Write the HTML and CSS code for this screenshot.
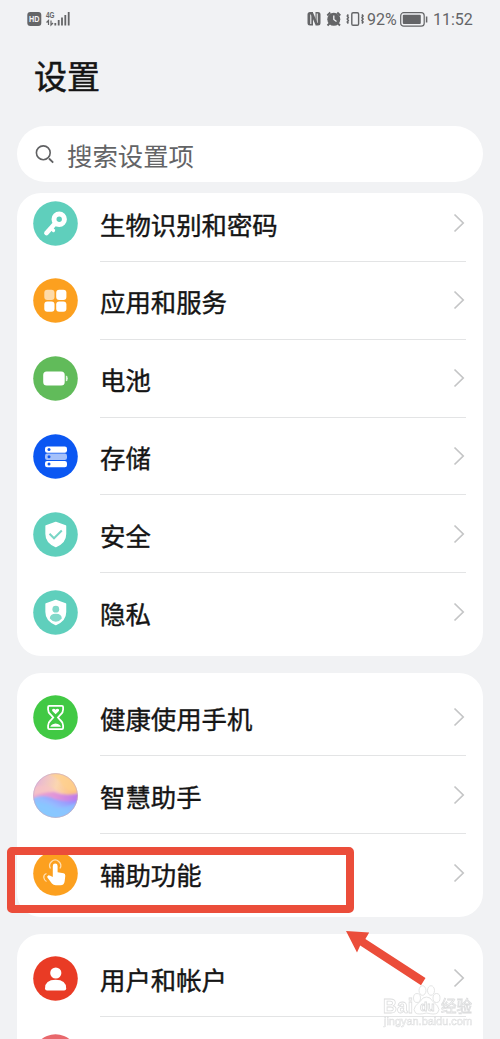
FILE: index.html
```html
<!DOCTYPE html>
<html lang="zh-CN">
<head>
<meta charset="utf-8">
<title>设置</title>
<link rel="stylesheet" href="styles.css">
</head>
<body>
<svg class="defs" width="0" height="0">
  <defs>
    <linearGradient id="orbTop" x1="0" y1="0.2" x2="1" y2="0.5"><stop offset="0" stop-color="#e3b0dc"/><stop offset=".5" stop-color="#fbd6b0"/><stop offset="1" stop-color="#fdb872"/></linearGradient>
    <linearGradient id="orbMid" x1="0" y1="0" x2="1" y2="0"><stop offset="0" stop-color="#f0aacb"/><stop offset=".5" stop-color="#de8fdc"/><stop offset="1" stop-color="#b26ef5"/></linearGradient>
    <linearGradient id="orbLow" x1="0" y1="1" x2="1" y2="0"><stop offset="0" stop-color="#7fd4fa"/><stop offset=".55" stop-color="#94bcff"/><stop offset="1" stop-color="#a66bfa"/></linearGradient>
    <clipPath id="orbClip"><circle cx="22.5" cy="22.5" r="22.2"/></clipPath>
    <filter id="orbSoft"><feGaussianBlur stdDeviation="1"/></filter>
    <symbol id="chev" viewBox="0 0 12 20"><path d="M1.5 1.5 10.2 10 1.5 18.5" fill="none" stroke="#c4c5c6" stroke-width="1.7"/></symbol>
  </defs>
</svg>
<div class="phone">
  <header class="status">
    <svg class="status-left" width="46" height="18" viewBox="0 0 46 18">
      <rect x="0.3" y="3" width="14" height="14" rx="3" fill="#646567"/>
      <text x="7.3" y="13.200" class="hd" textLength="10.500" lengthAdjust="spacingAndGlyphs">HD</text>
      <text x="19" y="9" class="net" textLength="8.500" lengthAdjust="spacingAndGlyphs">4G</text>
      <path d="M21.500 16v-4.500l-2 2M24 11.500v4.500l2-2" fill="none" stroke="#646567" stroke-width="1.2"/>
      <path d="M28.300 14v2.500M31.700 11v5.500M35 8.500v8M38.300 6v10.500M41.700 3v13.500" fill="none" stroke="#646567" stroke-width="1.800"/>
    </svg>
    <div class="status-right">
      <svg width="60" height="16" viewBox="0 0 60 16">
        <path d="M3 1h3v13.500H3q-2.500 0-2.500-2.500V3.500Q.500 1 3 1M8.500 1H11q2.500 0 2.500 2.500V12q0 2.500-2.500 2.500H8.500z" fill="#646567"/>
        <path d="M3.800 13V3.500M10.200 12V2.500" stroke="#f1f2f4" stroke-width="1.100"/>
        <path d="M5 2.500 9.500 13" stroke="#646567" stroke-width="2.600"/>
        <circle cx="26.800" cy="8.300" r="6.500" fill="#646567"/>
        <path d="m20.300 4.500 3-3M30.300 1.500l3 3M22.500 12.500l-2 2M31 12.500l2 2" stroke="#646567" stroke-width="1.900"/>
        <path d="M26.800 4.500V8.500l2.700 2" fill="none" stroke="#f1f2f4" stroke-width="1.300"/>
        <rect x="44.800" y="1.700" width="6.800" height="12.600" rx="1.300" fill="none" stroke="#646567" stroke-width="1.400"/>
        <path d="m41.300 3.500-1 1.500 1 1.500-1 1.500 1 1.500-1 1.500 1 1.500M55 3.500l1 1.500-1 1.500 1 1.500-1 1.500 1 1.500-1 1.500" fill="none" stroke="#646567" stroke-width="1.600"/>
      </svg>
      <span class="pct">92%</span>
      <svg class="batt" width="28" height="15" viewBox="0 0 28 15"><rect x=".7" y=".7" width="23.500" height="13.500" rx="3" fill="none" stroke="#646567" stroke-width="1.200"/><rect x="2.800" y="2.800" width="18" height="9.300" rx="1" fill="#646567"/><path d="M26.600 4.500v6" stroke="#646567" stroke-width="1.500"/></svg>
      <span class="time">11:52</span>
    </div>
  </header>
  <h1 class="title">设置</h1>
  <div class="search">
    <svg width="20" height="20" viewBox="0 0 20 20"><circle cx="8.300" cy="8.800" r="6.900" fill="none" stroke="#606163" stroke-width="1.600"/><path d="m14 14.500 4.200 4.200" stroke="#606163" stroke-width="1.800"/></svg>
    <span>搜索设置项</span>
  </div>

  <section class="card card-first">
    <div class="row">
      <svg class="icon" viewBox="0 0 45 45"><circle cx="22.500" cy="22.500" r="22.300" fill="#5fcfbc"/><path d="m22.500 22-9 10" stroke="#fff" stroke-width="4.800" stroke-linecap="round"/><path d="m18.500 27.500 2 2" stroke="#fff" stroke-width="3.200" stroke-linecap="round"/><circle cx="26.200" cy="18.200" r="5.200" fill="none" stroke="#fff" stroke-width="5"/></svg>
      <div class="body"><span>生物识别和密码</span><svg class="chev"><use href="#chev"/></svg></div>
    </div>
    <div class="row">
      <svg class="icon" viewBox="0 0 45 45"><circle cx="22.500" cy="22.500" r="22.300" fill="#fca01f"/><g fill="#fff"><rect x="11.300" y="11.700" width="10.200" height="10.200" rx="3" opacity=".62"/><rect x="23.200" y="11.700" width="10.200" height="10.200" rx="3"/><rect x="11.300" y="23.500" width="10.200" height="10.200" rx="3"/><rect x="23.200" y="23.500" width="10.200" height="10.200" rx="3"/></g></svg>
      <div class="body"><span>应用和服务</span><svg class="chev"><use href="#chev"/></svg></div>
    </div>
    <div class="row">
      <svg class="icon" viewBox="0 0 45 45"><circle cx="22.500" cy="22.500" r="22.300" fill="#61bb5a"/><rect x="10.200" y="15.400" width="21.500" height="14" rx="3.500" fill="#fff"/><path d="M32.800 19.500q2 .3 2 2.900t-2 2.900z" fill="#fff" opacity=".8"/></svg>
      <div class="body"><span>电池</span><svg class="chev"><use href="#chev"/></svg></div>
    </div>
    <div class="row">
      <svg class="icon" viewBox="0 0 45 45"><circle cx="22.500" cy="22.500" r="22.300" fill="#0b57f2"/><g fill="#fff"><rect x="12" y="12.400" width="22" height="6.300" rx="2.200"/><rect x="12" y="19.600" width="22" height="6.300" rx="2.200" opacity=".63"/><rect x="12" y="27" width="22" height="6.300" rx="2.200"/></g><g fill="#0b57f2"><circle cx="16" cy="15.500" r="1.500"/><circle cx="16" cy="22.700" r="1.500"/><circle cx="16" cy="30.100" r="1.500"/></g></svg>
      <div class="body"><span>存储</span><svg class="chev"><use href="#chev"/></svg></div>
    </div>
    <div class="row">
      <svg class="icon" viewBox="0 0 45 45"><circle cx="22.500" cy="22.500" r="22.300" fill="#5fcfbc"/><path d="M22.800 10.500 32.500 14V22q0 8.500-9.700 12.500Q13.100 30.500 13.100 22v-8z" fill="#fff" stroke="#fff" stroke-width="1.500" stroke-linejoin="round"/><path d="m16.500 21.800 4.500 4.500 7.800-7.800" fill="none" stroke="#79d6c6" stroke-width="2"/></svg>
      <div class="body"><span>安全</span><svg class="chev"><use href="#chev"/></svg></div>
    </div>
    <div class="row">
      <svg class="icon" viewBox="0 0 45 45"><circle cx="22.500" cy="22.500" r="22.300" fill="#5fcfbc"/><path d="M22.800 10.500 32.500 14V22q0 8.500-9.700 12.500Q13.100 30.500 13.100 22v-8z" fill="#fff" stroke="#fff" stroke-width="1.500" stroke-linejoin="round"/><circle cx="22.800" cy="19.200" r="3.400" fill="#82d9ca"/><path d="M16.800 28.500q0-4.700 6-4.700t6 4.700q-2.500 3.200-6 3.200t-6-3.200" fill="#82d9ca"/></svg>
      <div class="body"><span>隐私</span><svg class="chev"><use href="#chev"/></svg></div>
    </div>
  </section>

  <section class="card">
    <div class="row">
      <svg class="icon" viewBox="0 0 45 45"><circle cx="22.500" cy="22.500" r="22.300" fill="#41c944"/><path d="M16.300 10.800h12.600q1.200 0 1.200 1.200v2.500q0 3-2.400 5l-2.700 3 2.700 3q2.400 2 2.400 5V33q0 1.200-1.200 1.200H16.300q-1.200 0-1.200-1.200v-2.500q0-3 2.400-5l2.700-3-2.700-3q-2.400-2-2.400-5V12q0-1.200 1.200-1.200z" fill="none" stroke="#fff" stroke-width="1.800"/><path d="M22.600 19.300 19.300 16q-.8-2 1.400-2.200 1.300 0 1.900 1 .6-1 1.900-1 2.200.2 1.400 2.200zM17.300 31.700q.5-2.300 5.300-3.200 4.800.9 5.300 3.200z" fill="#fff"/></svg>
      <div class="body"><span>健康使用手机</span><svg class="chev"><use href="#chev"/></svg></div>
    </div>
    <div class="row">
      <svg class="icon" viewBox="0 0 45 45"><g clip-path="url(#orbClip)"><path fill="url(#orbTop)" d="M0 0h45v45H0z"/><g filter="url(#orbSoft)"><path d="M8 0Q25 2 29 12q7 9 18 5V-3H10z" fill="#ffd08c" opacity=".75"/><path d="M-3 17C9 8 18 14 25 18s12 5 23 0v30H-3z" fill="#f7c3c6" opacity=".75"/><path d="M-3 24q12-5 24-5 12 5 27 1v28H-3z" fill="url(#orbMid)" opacity=".9"/><path d="M-3 27q9-6 20-3 14 7 31 2v22H-3z" fill="url(#orbLow)"/><path d="M-3 29q16-1 26 6 11 0 25-8v21H-3z" fill="#86caff" opacity=".6"/></g></g><circle cx="22.500" cy="22.500" r="21.900" fill="none" stroke="#c3a9c9" stroke-width=".6"/></svg>
      <div class="body"><span>智慧助手</span><svg class="chev"><use href="#chev"/></svg></div>
    </div>
    <div class="row">
      <svg class="icon" viewBox="0 0 45 45"><circle cx="22.500" cy="22.500" r="22.300" fill="#fca01f"/><path d="M19.800 15a2.400 2.400 0 0 1 4.800 0v6.200l6 1.100q1.800.4 1.700 2.500l-.6 5.200q-.4 4.200-4.200 4.200h-4.800q-2.300 0-3.800-1.800l-4.500-5.800q-.8-1.500.8-2.200 1.200-.4 4.600 1.600z" fill="#fff"/><path d="M17.500 17.500a5.500 5.500 0 1 1 9.400 0M13.500 22.500q-3 1-2.700 4 .3 2.600 2.700 4" fill="none" stroke="#fff" opacity=".65" stroke-width="1.300"/></svg>
      <div class="body"><span>辅助功能</span><svg class="chev"><use href="#chev"/></svg></div>
    </div>
  </section>

  <section class="card">
    <div class="row">
      <svg class="icon" viewBox="0 0 45 45"><circle cx="22.500" cy="22.500" r="22.300" fill="#e93b25"/><circle cx="22.800" cy="17" r="5.600" fill="#fff"/><path d="M12 32.500q0-8.700 10.600-8.700t10.600 8.700q0 2-2 2H14q-2 0-2-2z" fill="#fff"/></svg>
      <div class="body"><span>用户和帐户</span><svg class="chev"><use href="#chev"/></svg></div>
    </div>
    <div class="row">
      <svg class="icon" viewBox="0 0 45 45"><circle cx="22.500" cy="22.500" r="22.300" fill="#e8686c"/></svg>
      <div class="body"></div>
    </div>
  </section>

  <div class="highlight"></div>
  <svg class="arrow" width="82" height="58" viewBox="0 0 82 58"><path d="M1 1 24.200 2.500 20.400 9 80.500 48 76 55.200 15.200 15.500 12 22.500z" fill="#eb4d3a"/></svg>
  <svg class="watermark" width="96" height="46" viewBox="0 0 96 46">
    <g fill="#fff" stroke="#d9dadb" stroke-width=".8">
      <text x="1" y="28" class="wm-latin" textLength="30" lengthAdjust="spacingAndGlyphs">Bai</text>
      <ellipse cx="35" cy="13" rx="3.500" ry="4.500"/><ellipse cx="40.500" cy="5.500" rx="3.500" ry="4.800"/><ellipse cx="49" cy="5.500" rx="3.500" ry="4.800"/><ellipse cx="54.500" cy="13" rx="3.500" ry="4.500"/>
      <path d="M44.500 12q4 0 6 4l5 5q3 4 0 7-3 2-11 0-8 2-11 0-3-3 0-7l5-5q2-4 6-4z"/>
      <text x="38" y="26" class="wm-du">du</text>
      <text x="59" y="27" class="wm-cjk">经验</text>
      <text x="2" y="40" class="wm-url" textLength="88" lengthAdjust="spacingAndGlyphs">jingyan.baidu.com</text>
    </g>
  </svg>
</div>
</body>
</html>
```
FILE: styles.css
```css
* { box-sizing: border-box; }
html, body { margin: 0; height: 1039px; overflow: hidden; }
body { background: #f1f2f4; font-family: "Noto Sans CJK SC", sans-serif; color: #151515; }
.defs { position: absolute; }
.phone { position: relative; width: 500px; height: 1039px; overflow: hidden; padding: 0 17px; }

.status { height: 38px; display: flex; justify-content: space-between; align-items: flex-start; padding: 9px 10px 0; }
.status-right { display: flex; align-items: center; height: 20px; color: #646567; font-family: Roboto, sans-serif; font-size: 16.500px; line-height: 20px; }
.pct { width: 31px; margin-right: 2px; font-size: 16px; white-space: nowrap; padding-top: 1px; }
.time { margin-left: 5px; width: 40px; white-space: nowrap; font-size: 16px; padding-top: 1px; }
.hd { font: bold 8.500px "Liberation Sans", sans-serif; fill: #f1f2f4; text-anchor: middle; }
.net { font: bold 8.500px "Liberation Sans", sans-serif; fill: #646567; }

.title { margin: 0 0 0 17px; height: 88px; padding-top: 13px; font-size: 33px; line-height: 48px; font-weight: 400; -webkit-text-stroke: .5px #151515; }
.search { height: 56px; border-radius: 28px; background: #fff; display: flex; align-items: center; gap: 12px; padding: 0 18px; margin-bottom: 11px; color: #636466; font-size: 25.400px; line-height: 56px; }
.search span { padding-top: 1px; }

.card { background: #fff; border-radius: 24px; overflow: hidden; padding: 5.600px 0 5px; margin-bottom: 17px; display: flex; flex-direction: column; }
.card-first { height: 463px; justify-content: flex-end; padding: 0 0 5px; }
.row { height: 77.800px; flex: none; display: flex; align-items: center; padding: 0 17px 0 16px; gap: 22px; }
.icon { width: 45px; height: 45px; flex: none; display: block; }
.body { flex: 1; height: 100%; display: flex; align-items: center; justify-content: space-between; border-bottom: 1px solid #e3e4e5; font-size: 25.400px; font-weight: 400; -webkit-text-stroke: .4px #151515; line-height: 38px; }
.row:last-child .body { border-bottom-color: transparent; }
.body span { padding-top: 2px; }
.chev { width: 12px; height: 20px; margin-right: 1.500px; }

.highlight { position: absolute; left: 7px; top: 847px; width: 347px; height: 66px; border: 8px solid #eb4d3a; border-radius: 5px; }
.arrow { position: absolute; left: 345px; top: 930px; }
.watermark { position: absolute; left: 382px; top: 985px; opacity: .9; }
.wm-latin { font: bold 20px "Liberation Sans", sans-serif; }
.wm-du { font: bold 12px "Liberation Sans", sans-serif; }
.wm-cjk { font: 400 15.500px "Noto Sans CJK SC", sans-serif; }
.wm-url { font: 10px "Liberation Sans", sans-serif; stroke-width: .5px; }
```
